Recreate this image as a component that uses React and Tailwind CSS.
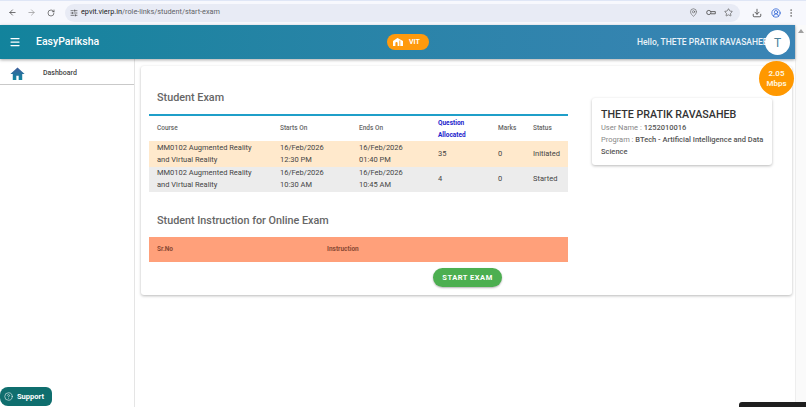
import React from "react";
import { ArrowLeft, ArrowRight, RotateCw, SlidersHorizontal, MapPin, Star, Download, CircleUserRound, EllipsisVertical, Menu, CircleHelp } from "lucide-react";

const Row = ({ bg, ends, starts, q, status, endsT, startsT }) => (
  <div className={`flex h-[25.5px] items-center text-[7.5px] leading-[12px] text-[#444] ${bg}`}>
    <div className="w-[131px] pl-2">MM0102 Augmented Reality<br />and Virtual Reality</div>
    <div className="w-[79px]">{starts}<br />{startsT}</div>
    <div className="w-[79px]">{ends}<br />{endsT}</div>
    <div className="w-[60px]">{q}</div>
    <div className="w-[35px]">0</div>
    <div>{status}</div>
  </div>
);

export default function App() {
  return (
    <div className="relative flex h-[407px] w-[806px] flex-col overflow-hidden bg-white font-['Roboto',sans-serif] antialiased">
      {/* browser toolbar */}
      <div className="flex h-[25px] items-center bg-[#f7f8fd] pl-[8px] pr-[10px] text-[#444] shadow-[inset_0_1px_0_#dfe6f6]">
        <ArrowLeft size={9} strokeWidth={2} />
        <ArrowRight size={9} strokeWidth={2} className="ml-[10px] text-[#999]" />
        <RotateCw size={8} strokeWidth={2} className="ml-[11px]" />
        <div className="ml-[10px] flex h-[18px] flex-1 items-center rounded-full bg-[#e8ebf5] pl-[5px] pr-[7px]">
          <SlidersHorizontal size={8} strokeWidth={2} />
          <span className="ml-[3px] text-[7.3px] text-[#222]">epvit.vierp.in<span className="text-[#5f6368]">/role-links/student/start-exam</span></span>
          <div className="ml-auto flex items-center gap-[8px] text-[#555]">
            <MapPin size={9} strokeWidth={1.6} />
            <svg width="10" height="9" viewBox="0 0 10 9" fill="none" stroke="currentColor" strokeWidth="0.9"><circle cx="2.8" cy="4.5" r="2.1" /><path d="M5 3.6h4.3v2.2H5" /></svg>
            <Star size={9} strokeWidth={1.8} />
          </div>
        </div>
        <Download size={10} strokeWidth={2} className="ml-[12px]" />
        <CircleUserRound size={10} strokeWidth={2} className="ml-[9px] text-[#3367d6]" />
        <EllipsisVertical size={10} strokeWidth={2} className="ml-[5px] text-[#777]" />
      </div>

      <div className="flex min-h-0 flex-1">
        <div className="flex min-w-0 flex-1 flex-col">
          {/* app header */}
          <header className="z-10 flex h-[34px] items-center bg-gradient-to-r from-[#12839c] to-[#3a84b5] pl-[9px] text-white shadow-[0_1px_3px_rgba(0,0,0,0.35)]">
            <Menu size={12} strokeWidth={2.5} />
            <span className="ml-[15px] w-[351px] text-[10.5px] font-medium">EasyPariksha</span>
            <div className="flex h-[16px] w-[42px] items-center gap-[6px] rounded-full bg-[#ff9a0d] pl-[6px] text-[7px] font-bold">
              <svg width="10" height="8" viewBox="0 0 10 8"><path fill="#fff" d="M0 3 4.5 0 10 3v5H0Z" /><path fill="#ff9a0d" d="M2.4 8V5.2a1.1 1.1 0 0 1 2.2 0V8ZM6.4 8V2.4h.9V8Z" /></svg>
              VIT
            </div>
            <span className="ml-[208px] text-[8.5px] font-medium text-[#e9f2f8]">Hello, THETE PRATIK RAVASAHEB</span>
          </header>

          <div className="flex min-h-0 flex-1">
            {/* sidebar */}
            <aside className="relative w-[135px] shrink-0 border-r border-[#e5e5e5]">
              <div className="flex h-[26px] items-center border-b border-[#c9c9c9] pl-[10px] pt-[4px]">
                <svg width="15" height="13" viewBox="0 0 24 22">
                  <defs><linearGradient id="h" x1="0" y1="0" x2="0" y2="1"><stop offset="0" stopColor="#3f5d9b" /><stop offset="1" stopColor="#0f86a0" /></linearGradient></defs>
                  <path fill="url(#h)" d="M12 1 0 12h4v10h6v-7h4v7h6V12h4Z" />
                </svg>
                <span className="ml-[18px] text-[7px] font-medium text-[#444]">Dashboard</span>
              </div>
            </aside>

            {/* main */}
            <main className="min-w-0 flex-1 pl-[6px] pr-[3px] pt-[7px]">
              <div className="flex h-[229px] rounded-[3px] bg-white pl-[8px] shadow-[0_1px_3px_rgba(0,0,0,0.28)]">
                <div className="w-[419px] shrink-0">
                  <h2 className="pl-2 pt-[25px] text-[10.8px] font-medium leading-[14px] text-[#666]">Student Exam</h2>
                  <div className="mt-[9px] border-t-2 border-[#1f9fc9]">
                    <div className="flex h-[25px] items-center text-[6.5px] font-medium text-[#666]">
                      <div className="w-[131px] pl-2">Course</div>
                      <div className="w-[79px]">Starts On</div>
                      <div className="w-[79px]">Ends On</div>
                      <div className="w-[60px] leading-[12px] font-bold text-[#2222cc]">Question<br />Allocated</div>
                      <div className="w-[35px]">Marks</div>
                      <div>Status</div>
                    </div>
                    <Row bg="bg-[#ffe9cc]" starts="16/Feb/2026" startsT="12:30 PM" ends="16/Feb/2026" endsT="01:40 PM" q="35" status="Initiated" />
                    <Row bg="bg-[#ececec]" starts="16/Feb/2026" startsT="10:30 AM" ends="16/Feb/2026" endsT="10:45 AM" q="4" status="Started" />
                  </div>
                  <h2 className="pl-2 pt-[22px] text-[10.8px] font-medium leading-[14px] text-[#666]">Student Instruction for Online Exam</h2>
                  <div className="mt-[9px] flex h-[25px] items-center bg-[#ffa07a] text-[6.5px] font-bold text-[#8a4a35]">
                    <div className="w-[178px] pl-2">Sr.No</div>
                    <div>Instruction</div>
                  </div>
                  <div className="mt-[6px] flex justify-end pr-[66px]">
                    <button className="flex h-[19px] w-[69px] items-center justify-center rounded-full bg-[#4caf50] text-[7.5px] font-bold tracking-[0.5px] text-white shadow-[0_1px_2px_rgba(0,0,0,0.3)]">START EXAM</button>
                  </div>
                </div>
                <div className="ml-[24px] mt-[32px] h-[67px] w-[180px] rounded-[3px] bg-white pl-[9px] pr-[6px] pt-[10px] shadow-[0_1px_3px_rgba(0,0,0,0.28)]">
                  <div className="text-[10.7px] font-medium leading-[14px] text-[#333]">THETE PRATIK RAVASAHEB</div>
                  <div className="text-[7.5px] leading-[12px] text-[#888]">User Name : <span className="font-medium text-[#555]">1252010016</span></div>
                  <div className="text-[7.5px] leading-[12px] text-[#888]">Program : <span className="font-medium text-[#555]">BTech - Artificial Intelligence and Data</span></div>
                  <div className="text-[7.5px] font-medium leading-[12px] text-[#555]">Science</div>
                </div>
              </div>
            </main>
          </div>
        </div>

        {/* scrollbar */}
        <div className="flex w-[11px] shrink-0 justify-center border-l border-[#eeeeee] bg-[#fafafa] pt-[4px]">
          <div className="h-0 w-0 border-x-[3px] border-b-[4px] border-x-transparent border-b-[#a0a0a0]" />
        </div>
      </div>

      {/* overlays */}
      <div className="absolute left-[765px] top-[30px] z-20 flex h-[25px] w-[25px] items-center justify-center rounded-full bg-white text-[12px] text-[#4a7f99]">T</div>
      <div className="absolute left-[759px] top-[61px] z-20 flex h-[35px] w-[35px] items-center justify-center rounded-full bg-[#ff9800] text-center text-[8px] font-bold leading-[10px] text-[#fff3dc]">2.05<br />Mbps</div>
      <div className="absolute bottom-[1px] left-0 z-20 flex h-[19px] w-[52px] items-center gap-[4px] rounded-r-[6px] rounded-l-[8px] bg-[#0f6e6e] pl-[4px] text-[7.5px] font-bold text-white">
        <CircleHelp size={9} strokeWidth={1.5} />Support
      </div>
      <div className="absolute bottom-0 left-[739px] z-20 h-[5px] w-[67px] rounded-tl-[3px] bg-[#1f1f1f]" />
    </div>
  );
}
